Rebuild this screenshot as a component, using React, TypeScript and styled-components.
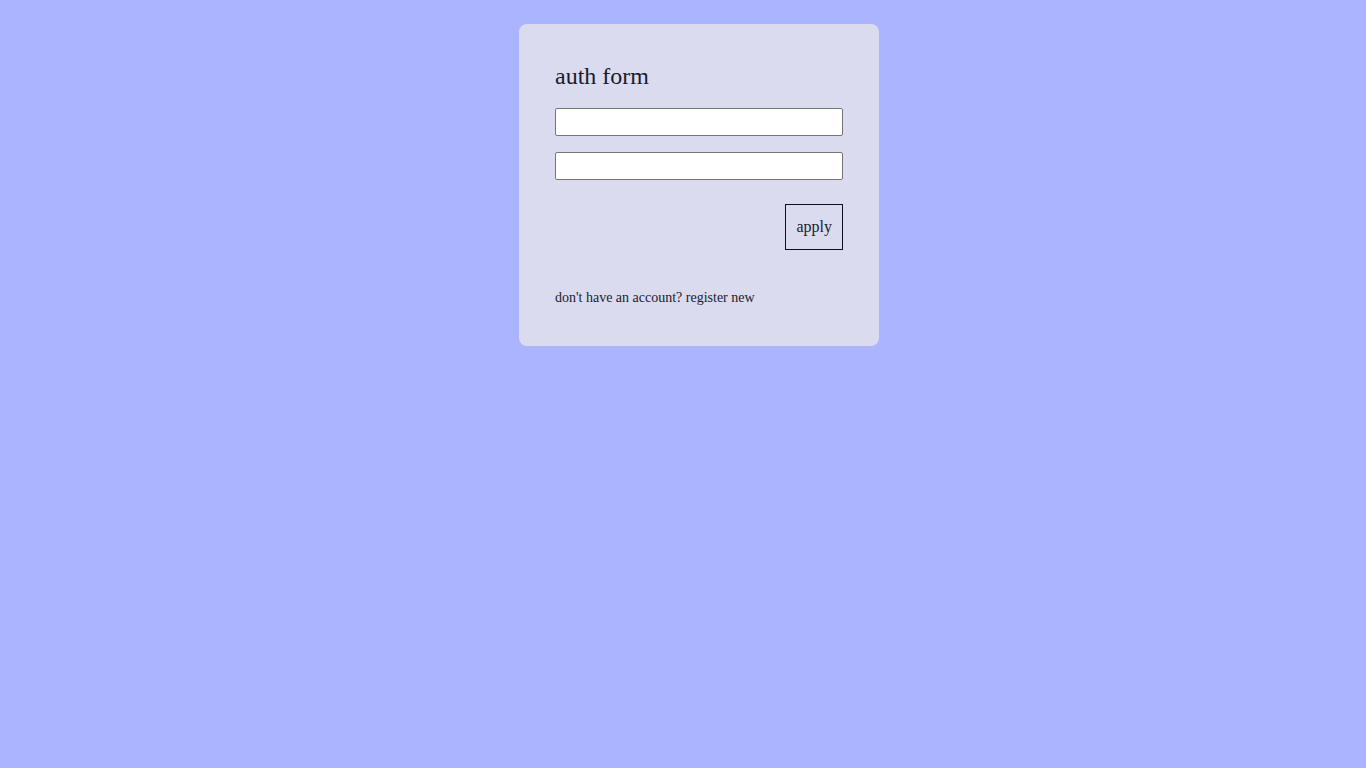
import * as React from "react";
import styled, { createGlobalStyle } from "styled-components";

const GlobalStyle = createGlobalStyle`
  html, body {
    margin: 0;
    padding: 0;
    background: #abb4fe;
    font-family: "Liberation Serif", "Times New Roman", serif;
    color: #1a1a2e;
  }
`;

const Page = styled.main`
  display: flex;
  justify-content: center;
  align-items: flex-start;
  min-height: 100vh;
  padding: 24px 0 0 32px;
  box-sizing: border-box;
`;

const Card = styled.form`
  width: 360px;
  box-sizing: border-box;
  padding: 36px 36px 40px;
  background: #dadbef;
  border-radius: 8px;
  display: flex;
  flex-direction: column;
`;

const Title = styled.h1`
  margin: 0 0 18px;
  padding-top: 2px;
  font-size: 24px;
  font-weight: 400;
  line-height: 28px;
`;

const Fields = styled.div`
  display: flex;
  flex-direction: column;
  gap: 16px;
`;

const Field = styled.input`
  box-sizing: border-box;
  width: 100%;
  height: 28px;
  margin: 0;
  padding: 2px 6px;
  background: #fff;
  border: 1px solid #767676;
  border-radius: 2px;
  font: 14px "Liberation Serif", serif;
`;

const Actions = styled.div`
  display: flex;
  justify-content: flex-end;
  margin-top: 24px;
`;

const ApplyButton = styled.button`
  box-sizing: border-box;
  height: 46px;
  padding: 0 10px;
  background: transparent;
  border: 1px solid #0d0d26;
  border-radius: 0;
  color: #1a1a2e;
  font: 16px "Liberation Serif", serif;
  cursor: pointer;
`;

const Footer = styled.p`
  margin: 40px 0 0;
  font-size: 14px;
  line-height: 16px;
`;

export default function App() {
  return (
    <>
      <GlobalStyle />
      <Page>
        <Card onSubmit={(e) => e.preventDefault()}>
          <Title>auth form</Title>
          <Fields>
            <Field type="text" />
            <Field type="password" />
          </Fields>
          <Actions>
            <ApplyButton type="submit">apply</ApplyButton>
          </Actions>
          <Footer>don't have an account? register new</Footer>
        </Card>
      </Page>
    </>
  );
}
